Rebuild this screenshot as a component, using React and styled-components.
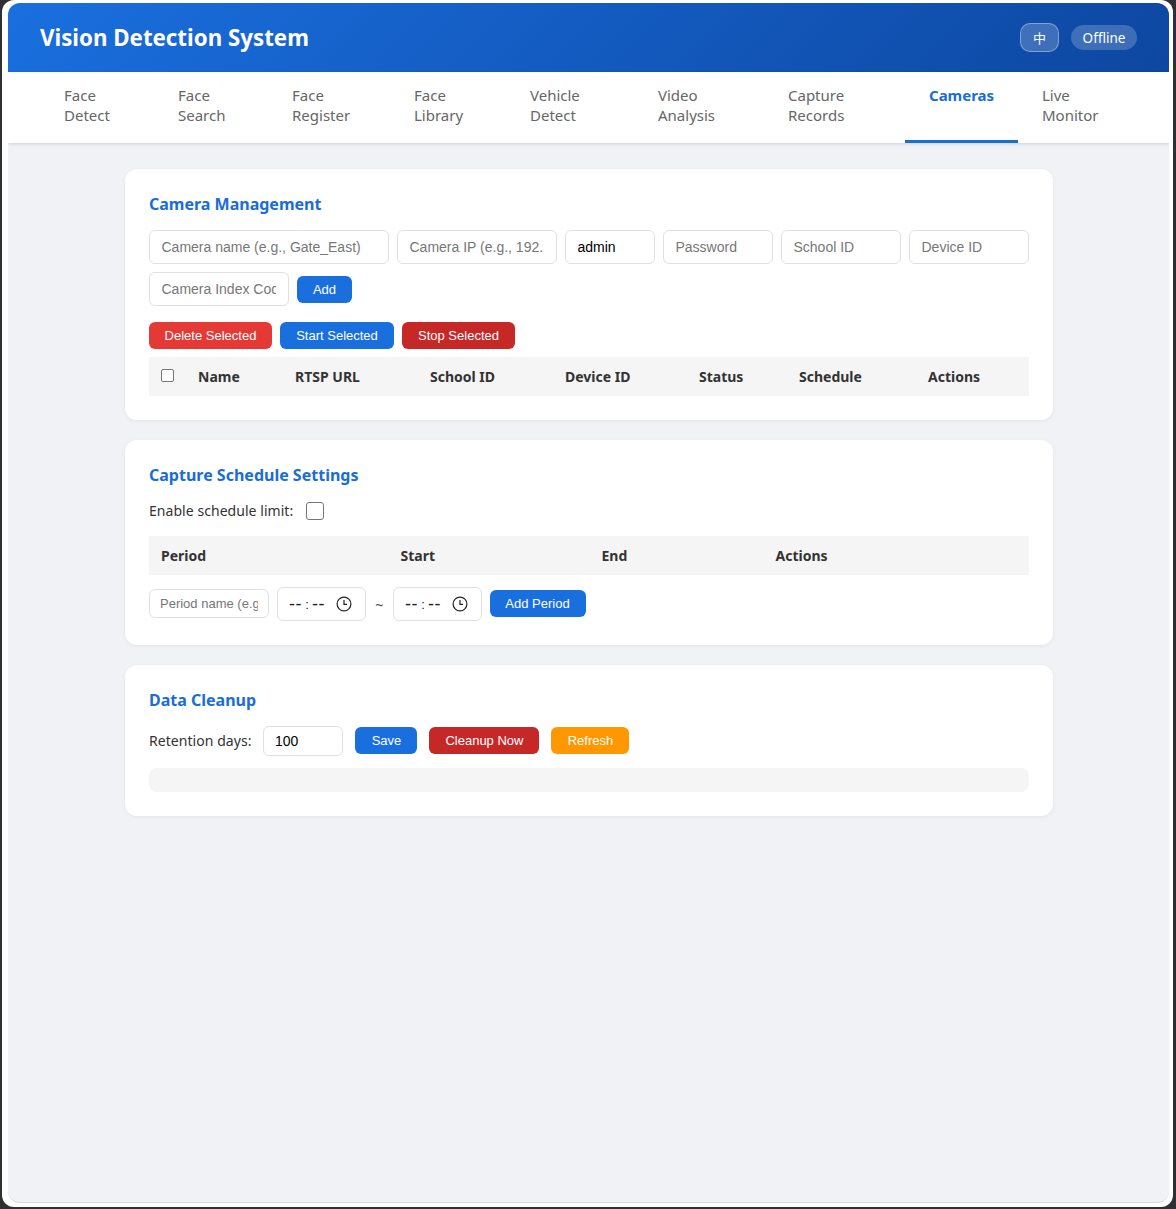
import React from 'react';
import styled, { createGlobalStyle } from 'styled-components';

const GlobalStyle = createGlobalStyle`
  html, body {
    margin: 0;
    height: 100%;
    background: #2e3033;
  }
  * {
    box-sizing: border-box;
  }
  #root {
    height: 100%;
  }
  input, button {
    font-family: "Liberation Sans", Arial, sans-serif;
  }
`;

const Desktop = styled.div`
  height: 1209px;
  padding: 0 3px 2px 2px;
`;

const Frame = styled.div`
  height: 100%;
  padding: 3px 4px 4px 6px;
  background: #fff;
  border-radius: 12px;
  font-family: "Noto Sans", "Open Sans", sans-serif;
`;

const Window = styled.div`
  height: 100%;
  background: #f0f2f5;
  border-radius: 12px;
  overflow: hidden;
  border-bottom: 1px solid #d8d8d8;
`;

const Header = styled.header`
  height: 69px;
  padding: 0 32px;
  display: flex;
  align-items: center;
  justify-content: space-between;
  background: linear-gradient(135deg, #1a6fdf, #0d47a1);
`;

const Title = styled.h1`
  margin: 0;
  font-size: 22.3px;
  font-weight: 700;
  color: #fff;
`;

const HeaderRight = styled.div`
  display: flex;
  align-items: center;
  gap: 12px;
`;

const LangButton = styled.div`
  width: 39px;
  height: 29px;
  display: flex;
  align-items: center;
  justify-content: center;
  border: 1px solid rgba(255, 255, 255, 0.35);
  border-radius: 10px;
  background: rgba(255, 255, 255, 0.2);
  color: #fff;
  font-size: 13px;
  font-family: "Noto Sans CJK SC", sans-serif;
`;

const StatusBadge = styled.div`
  width: 66px;
  height: 25px;
  display: flex;
  align-items: center;
  justify-content: center;
  border-radius: 13px;
  background: rgba(255, 255, 255, 0.2);
  color: #fff;
  font-size: 13.5px;
`;

const Nav = styled.nav`
  height: 71px;
  padding: 0 32px;
  display: flex;
  background: #fff;
  box-shadow: 0 1px 3px rgba(0, 0, 0, 0.15);
`;

const Tab = styled.div`
  flex: none;
  width: ${(p) => p.$w}px;
  padding: 13px 24px 0;
  font-size: 15px;
  line-height: 20px;
  color: ${(p) => (p.$active ? '#1a6dd4' : '#666')};
  font-weight: ${(p) => (p.$active ? 700 : 400)};
  border-bottom: 3px solid ${(p) => (p.$active ? '#1a6dd4' : 'transparent')};
`;

const Main = styled.main`
  width: 928px;
  margin: 26px 0 0 117px;
  display: flex;
  flex-direction: column;
  gap: 20px;
`;

const Card = styled.section`
  padding: 24px;
  background: #fff;
  border-radius: 12px;
  box-shadow: 0 1px 4px rgba(0, 0, 0, 0.06);
`;

const CardTitle = styled.h2`
  margin: 0 0 14px;
  font-size: 16px;
  line-height: 23px;
  font-weight: 700;
  color: #1a6dd4;
`;

const FormRow = styled.div`
  display: flex;
  flex-wrap: wrap;
  align-items: center;
  gap: 8px;
`;

const TextInput = styled.input`
  width: ${(p) => p.$w}px;
  height: ${(p) => p.$h || 34}px;
  padding: 0 ${(p) => p.$pr || 12}px 0 ${(p) => p.$px || 11.5}px;
  border: 1px solid #e0e0e0;
  border-radius: 6px;
  background: #fff;
  color: #000;
  font-size: ${(p) => p.$fs || 14}px;
  outline: none;
  &::placeholder {
    color: #777;
  }
`;

const TimeBox = styled.div`
  width: 88.5px;
  height: 34px;
  padding-left: 11px;
  display: flex;
  align-items: center;
  flex: none;
  border: 1px solid #e0e0e0;
  border-radius: 6px;
  background: #fff;
  color: #222;
  font-family: "Liberation Sans", Arial, sans-serif;
  svg {
    margin-left: 11px;
  }
`;

const TimeDashes = styled.span`
  width: 13px;
  font-size: 18px;
  line-height: 1;
  letter-spacing: 0.5px;
  white-space: nowrap;
`;

const TimeColon = styled.span`
  width: 10px;
  text-align: center;
  font-size: 13px;
  line-height: 1;
`;

const Btn = styled.button`
  width: ${(p) => p.$w}px;
  height: 27px;
  padding: 0;
  flex: none;
  border: 0;
  border-radius: 6px;
  background: ${(p) => p.$bg || '#1a6fdf'};
  color: #fff;
  font-size: 13px;
  white-space: nowrap;
`;

const ActionRow = styled.div`
  margin: 16px 0 8px;
  display: flex;
  gap: 8px;
`;

const HeadRow = styled.div`
  height: 39px;
  padding-bottom: 1px;
  display: flex;
  align-items: center;
  background: #f5f5f5;
  color: #333;
  font-size: 14px;
  font-weight: 700;
`;

const HeadCell = styled.div`
  width: ${(p) => p.$w}px;
  flex: none;
  padding-left: 12px;
`;

const CheckCell = styled.div`
  width: 37px;
  flex: none;
  padding: 0 0 2px 12px;
  display: flex;
`;

const Check = styled.span`
  width: ${(p) => p.$s}px;
  height: ${(p) => p.$s}px;
  display: block;
  flex: none;
  border: 1px solid #767676;
  border-radius: ${(p) => (p.$s > 14 ? 3 : 2)}px;
  background: #fff;
`;

const ScheduleToggle = styled.div`
  margin-bottom: 15px;
  display: flex;
  align-items: center;
  gap: 13px;
  font-size: 14px;
  line-height: 20px;
  letter-spacing: 0.05px;
  color: #333;
`;

const PeriodRow = styled(FormRow)`
  margin-top: 12px;
  flex-wrap: nowrap;
  & > input,
  & > button {
    margin-bottom: 1px;
  }
`;

const Tilde = styled.span`
  width: 11.5px;
  text-align: center;
  font-size: 14px;
  color: #444;
`;

const RetentionRow = styled.div`
  display: flex;
  align-items: center;
  gap: 12px;
  font-size: 14px;
  letter-spacing: 0.05px;
  color: #333;
  & > button {
    margin-bottom: 1px;
  }
`;

const RetentionLabel = styled.span`
  padding-bottom: 2px;
`;

const StatusBar = styled.div`
  height: 24px;
  margin-top: 12px;
  border-radius: 8px;
  background: #f5f5f5;
`;

const ClockIcon = () => (
  <svg width="16" height="16" viewBox="0 0 16 16" fill="none" stroke="#222" strokeWidth="1.2">
    <circle cx="8" cy="8" r="6.9" />
    <path d="M8 4v4.4h3" />
  </svg>
);

const TimeField = () => (
  <TimeBox>
    <TimeDashes>--</TimeDashes>
    <TimeColon>:</TimeColon>
    <TimeDashes>--</TimeDashes>
    <ClockIcon />
  </TimeBox>
);

const tabs = [
  ['Face Detect', 114],
  ['Face Search', 114],
  ['Face Register', 122],
  ['Face Library', 116],
  ['Vehicle Detect', 128],
  ['Video Analysis', 130],
  ['Capture Records', 141],
  ['Cameras', 113],
  ['Live Monitor', 119],
];

const cameraColumns = [
  ['Name', 97],
  ['RTSP URL', 135],
  ['School ID', 135],
  ['Device ID', 134],
  ['Status', 100],
  ['Schedule', 129],
  ['Actions', 113],
];

const periodColumns = [
  ['Period', 239.5],
  ['Start', 201],
  ['End', 174],
  ['Actions', 265],
];

const App = () => (
  <>
    <GlobalStyle />
    <Desktop>
      <Frame>
        <Window>
          <Header>
            <Title>Vision Detection System</Title>
            <HeaderRight>
              <LangButton>中</LangButton>
              <StatusBadge>Offline</StatusBadge>
            </HeaderRight>
          </Header>
          <Nav>
            {tabs.map(([t, w]) => (
              <Tab key={t} $w={w} $active={t === 'Cameras'}>{t}</Tab>
            ))}
          </Nav>
          <Main>
            <Card>
              <CardTitle>Camera Management</CardTitle>
              <FormRow>
                <TextInput $w={240} placeholder="Camera name (e.g., Gate_East)" />
                <TextInput $w={160} placeholder="Camera IP (e.g., 192.168.1.100)" />
                <TextInput $w={90} defaultValue="admin" />
                <TextInput $w={110} placeholder="Password" />
                <TextInput $w={120} placeholder="School ID" />
                <TextInput $w={120} placeholder="Device ID" />
                <TextInput $w={140} placeholder="Camera Index Code" />
                <Btn $w={55}>Add</Btn>
              </FormRow>
              <ActionRow>
                <Btn $w={123} $bg="#e53935">Delete Selected</Btn>
                <Btn $w={114}>Start Selected</Btn>
                <Btn $w={113} $bg="#c62828">Stop Selected</Btn>
              </ActionRow>
              <HeadRow>
                <CheckCell><Check $s={13} /></CheckCell>
                {cameraColumns.map(([label, w]) => (
                  <HeadCell key={label} $w={w}>{label}</HeadCell>
                ))}
              </HeadRow>
            </Card>
            <Card>
              <CardTitle>Capture Schedule Settings</CardTitle>
              <ScheduleToggle>
                Enable schedule limit:
                <Check $s={18} />
              </ScheduleToggle>
              <HeadRow>
                {periodColumns.map(([label, w]) => (
                  <HeadCell key={label} $w={w}>{label}</HeadCell>
                ))}
              </HeadRow>
              <PeriodRow>
                <TextInput $w={120} $h={29} $fs={13} $px={10} $pr={10} placeholder="Period name (e.g., Morning)" />
                <TimeField />
                <Tilde>~</Tilde>
                <TimeField />
                <Btn $w={96}>Add Period</Btn>
              </PeriodRow>
            </Card>
            <Card>
              <CardTitle>Data Cleanup</CardTitle>
              <RetentionRow>
                <RetentionLabel>Retention days:</RetentionLabel>
                <TextInput $w={80} $h={30} $px={10.5} defaultValue="100" />
                <Btn $w={62}>Save</Btn>
                <Btn $w={110} $bg="#c62828">Cleanup Now</Btn>
                <Btn $w={78} $bg="#ff9800">Refresh</Btn>
              </RetentionRow>
              <StatusBar />
            </Card>
          </Main>
        </Window>
      </Frame>
    </Desktop>
  </>
);

export default App;
